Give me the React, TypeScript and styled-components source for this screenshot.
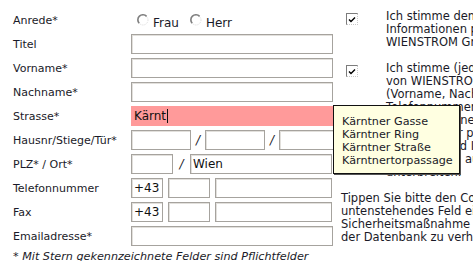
import React from 'react';
import styled, { createGlobalStyle } from 'styled-components';

const GlobalStyle = createGlobalStyle`
  html, body {
    margin: 0;
    padding: 0;
    background: #ffffff;
    overflow: hidden;
  }
  body {
    font-family: "DejaVu Sans", Verdana, sans-serif;
    font-size: 11px;
    color: #1a1a28;
  }
`;

const Page = styled.div`
  position: relative;
  display: flex;
  align-items: flex-start;
  gap: 8px;
  width: 700px;
  padding: 10px 0 0 13px;
`;

const FormColumn = styled.div`
  display: flex;
  flex-direction: column;
  width: 320px;
  flex: none;
`;

const FormGrid = styled.div`
  display: grid;
  grid-template-columns: 118px 202px;
  grid-auto-rows: 20px;
  row-gap: 4px;
  align-items: center;
`;

const Label = styled.div`
  white-space: nowrap;
  line-height: 13px;
`;

const Field = styled.div`
  display: flex;
  align-items: center;
  height: 20px;
`;

const TextBox = styled.div<{ $w?: number; $hot?: boolean }>`
  box-sizing: border-box;
  width: ${p => (p.$w ? `${p.$w}px` : '100%')};
  flex: none;
  height: 20px;
  display: flex;
  align-items: center;
  padding-left: 2px;
  font-size: 12px;
  color: #111;
  background: ${p => (p.$hot ? '#ff9a9a' : '#ffffff')};
  border: 1px solid ${p => (p.$hot ? '#ff9a9a' : '#a6a39e')};
  box-shadow: ${p => (p.$hot ? 'none' : 'inset 1px 1px 0 #e2e0dc')};
`;

const Caret = styled.span`
  display: inline-block;
  width: 1px;
  height: 14px;
  margin-left: 1px;
  background: #111;
`;

const Slash = styled.span<{ $w: number }>`
  width: ${p => p.$w}px;
  flex: none;
  text-align: center;
  font-size: 12px;
  font-style: italic;
`;

const Gap = styled.span`
  width: 5px;
  flex: none;
`;

const RadioGroup = styled.div`
  display: flex;
  align-items: center;
  padding-left: 6px;
  gap: 4px;
`;

const RadioOption = styled.label`
  display: flex;
  align-items: center;
  gap: 4px;
  margin-right: 7px;
  font-size: 12px;
`;

const RadioText = styled.span`
  position: relative;
  top: 3px;
`;

const Footer = styled.div`
  margin-top: 4px;
  font-style: italic;
  font-size: 11.2px;
  white-space: nowrap;
  line-height: 13px;
`;

const InfoColumn = styled.div`
  display: flex;
  flex-direction: column;
  gap: 13px;
  width: 340px;
  flex: none;
  font-size: 11.5px;
  line-height: 13px;
`;

const ConsentRow = styled.div`
  display: flex;
  align-items: flex-start;
`;

const CheckCell = styled.div`
  width: 45px;
  flex: none;
  padding: 3px 0 0 5px;
  box-sizing: border-box;
`;

const CheckBox = styled.div`
  box-sizing: border-box;
  width: 12px;
  height: 12px;
  border-top: 1px solid #7c7c7c;
  border-left: 1px solid #7c7c7c;
  border-right: 1px dotted #c8c8c8;
  border-bottom: 1px dotted #c8c8c8;
  background: #fff;
  display: flex;
  align-items: center;
  justify-content: center;
`;

const Paragraph = styled.div`
  white-space: nowrap;
`;

const Tooltip = styled.div`
  position: absolute;
  left: 333px;
  top: 105px;
  width: 127px;
  box-sizing: border-box;
  padding: 9px 0 6px 8px;
  background: #ffffe1;
  border: 1px solid #111;
  box-shadow: 1px 1px 0 #555;
  font-size: 11.2px;
  line-height: 13px;
  white-space: nowrap;
`;

const Radio = () => (
  <svg width="12" height="12" viewBox="0 0 12 12">
    <circle cx="6" cy="6" r="5" fill="#fff" stroke="#dcdcdc" strokeWidth="1" strokeDasharray="1 1" />
    <path d="M2.2 9.3 A5 5 0 0 1 9.6 2.4" fill="none" stroke="#808080" strokeWidth="1.6" />
  </svg>
);

const Check = () => (
  <svg width="8" height="7" viewBox="0 0 8 7">
    <path d="M1 3.5 L3 5.5 L7 1.5" fill="none" stroke="#000" strokeWidth="1.4" />
  </svg>
);

const App = () => (
  <>
    <GlobalStyle />
    <Page>
      <FormColumn>
        <FormGrid>
          <Label>Anrede*</Label>
          <RadioGroup>
            <RadioOption>
              <Radio />
              <RadioText>Frau</RadioText>
            </RadioOption>
            <RadioOption>
              <Radio />
              <RadioText>Herr</RadioText>
            </RadioOption>
          </RadioGroup>

          <Label>Titel</Label>
          <TextBox />

          <Label>Vorname*</Label>
          <TextBox />

          <Label>Nachname*</Label>
          <TextBox />

          <Label>Strasse*</Label>
          <TextBox $hot>
            Kärnt
            <Caret />
          </TextBox>

          <Label>Hausnr/Stiege/Tür*</Label>
          <Field>
            <TextBox $w={60} />
            <Slash $w={14}>/</Slash>
            <TextBox $w={60} />
            <Slash $w={14}>/</Slash>
            <TextBox $w={55} />
          </Field>

          <Label>PLZ* / Ort*</Label>
          <Field>
            <TextBox $w={42} />
            <Slash $w={17}>/</Slash>
            <TextBox $w={142}>Wien</TextBox>
          </Field>

          <Label>Telefonnummer</Label>
          <Field>
            <TextBox $w={32}>+43</TextBox>
            <Gap />
            <TextBox $w={42} />
            <Gap />
            <TextBox $w={117} />
          </Field>

          <Label>Fax</Label>
          <Field>
            <TextBox $w={32}>+43</TextBox>
            <Gap />
            <TextBox $w={42} />
            <Gap />
            <TextBox $w={117} />
          </Field>

          <Label>Emailadresse*</Label>
          <TextBox />
        </FormGrid>
        <Footer>* Mit Stern gekennzeichnete Felder sind Pflichtfelder</Footer>
      </FormColumn>

      <InfoColumn>
        <ConsentRow>
          <CheckCell>
            <CheckBox>
              <Check />
            </CheckBox>
          </CheckCell>
          <Paragraph>
            Ich stimme dem Erhalt von
            <br />
            Informationen per E-Mail der
            <br />
            WIENSTROM GmbH zu.
          </Paragraph>
        </ConsentRow>

        <ConsentRow>
          <CheckCell>
            <CheckBox>
              <Check />
            </CheckBox>
          </CheckCell>
          <Paragraph>
            Ich stimme (jederzeit widerruflich) zu,
            <br />
            von WIENSTROM GmbH meine Daten
            <br />
            (Vorname, Nachname, Adresse,
            <br />
            Telefonnummer, E-Mail) zu verwenden,
            <br />
            um mir Aktionen, Neuigkeiten und
            <br />
            per Post oder per Telefon
            <br />
            Angebote und Informationen
            <br />
            zu Produkten aus dem Haus
            <br />
            unterbreiten.
          </Paragraph>
        </ConsentRow>

        <Paragraph>
          Tippen Sie bitte den Code in das
          <br />
          untenstehendes Feld ein. Diese
          <br />
          Sicherheitsmaßnahme dient dazu, Spam in
          <br />
          der Datenbank zu verhindern.
        </Paragraph>
      </InfoColumn>

      <Tooltip>
        Kärntner Gasse
        <br />
        Kärntner Ring
        <br />
        Kärntner Straße
        <br />
        Kärntnertorpassage
      </Tooltip>
    </Page>
  </>
);

export default App;
